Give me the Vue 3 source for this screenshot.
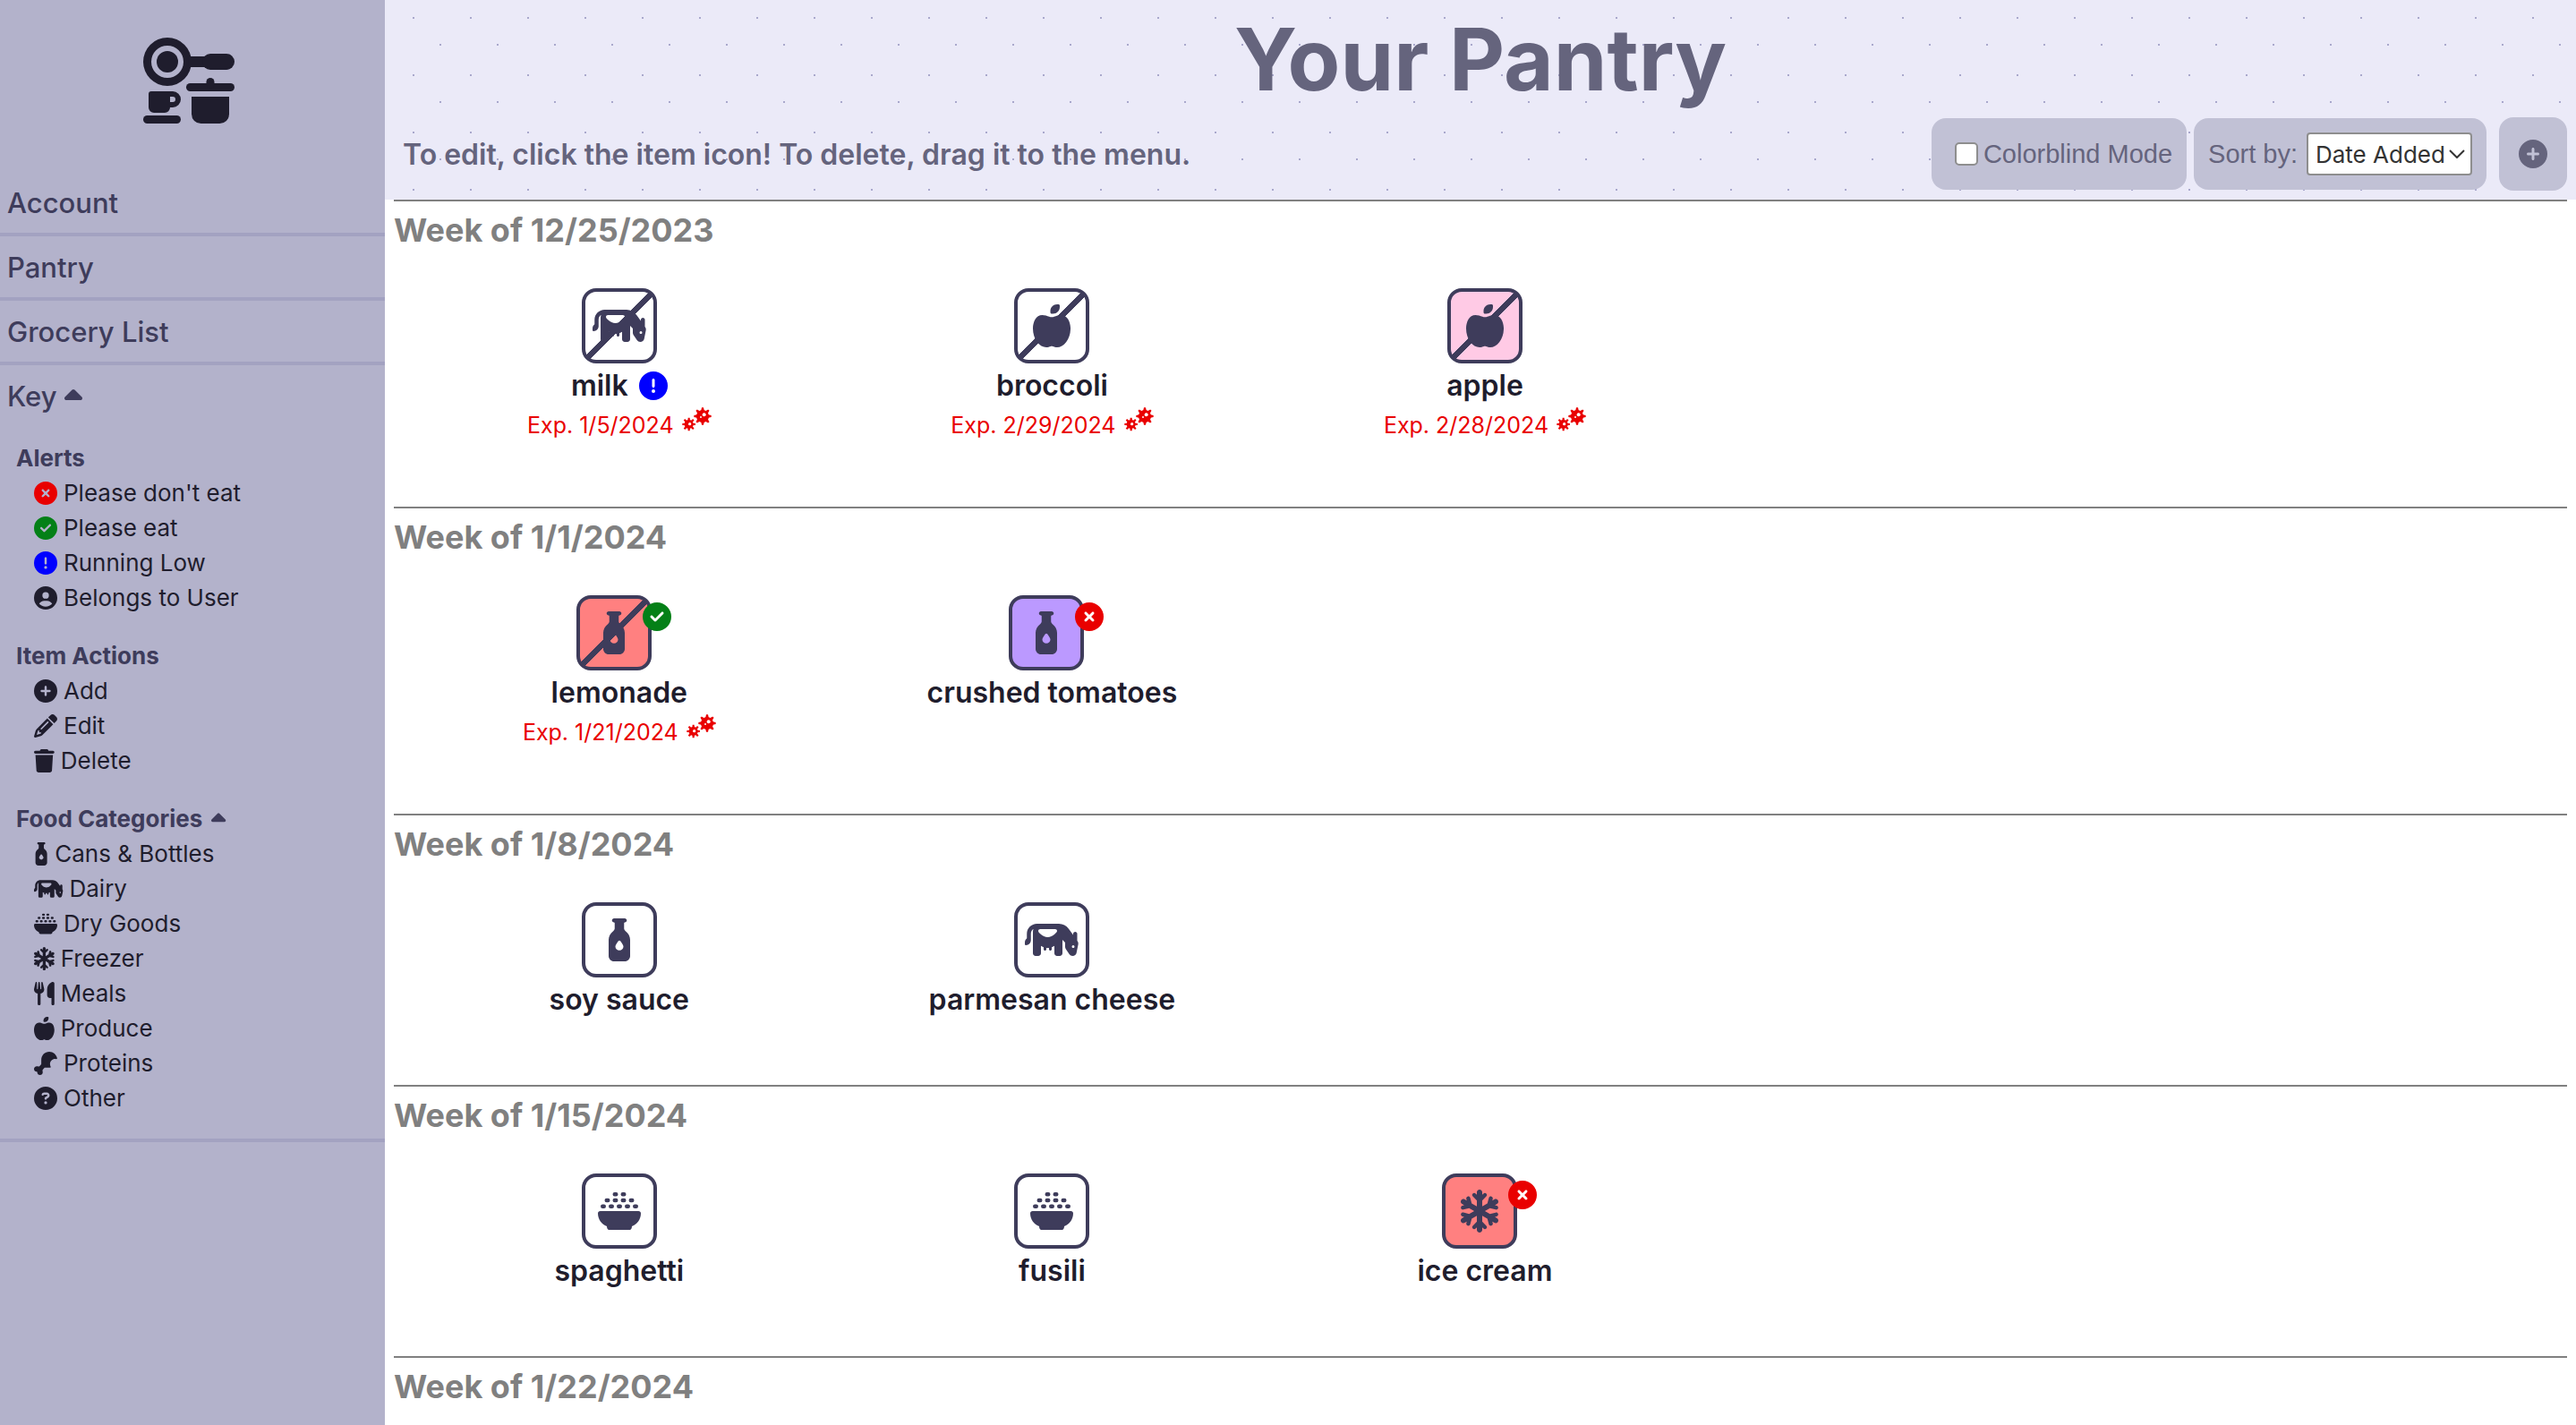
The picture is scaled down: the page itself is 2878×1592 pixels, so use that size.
<script setup>
import { ref } from 'vue'

const disc = 'M256 512A256 256 0 1 0 256 0a256 256 0 1 0 0 512z'

const icons = {
  xmark: { w: 512, d: disc + 'M175 175c9.4-9.4 24.6-9.4 33.9 0l47 47 47-47c9.4-9.4 24.6-9.4 33.9 0s9.4 24.6 0 33.9l-47 47 47 47c9.4 9.4 9.4 24.6 0 33.9s-24.6 9.4-33.9 0l-47-47-47 47c-9.4 9.4-24.6 9.4-33.9 0s-9.4-24.6 0-33.9l47-47-47-47c-9.4-9.4-9.4-24.6 0-33.9z' },
  check: { w: 512, d: disc + 'M369 209L241 337c-9.4 9.4-24.6 9.4-33.9 0l-64-64c-9.4-9.4-9.4-24.6 0-33.9s24.6-9.4 33.9 0l47 47L335 175c9.4-9.4 24.6-9.4 33.9 0s9.4 24.6 0 33.9z' },
  low: { w: 512, d: disc + 'm0-384c13.3 0 24 10.7 24 24V264c0 13.3-10.7 24-24 24s-24-10.7-24-24V152c0-13.3 10.7-24 24-24zM224 352a32 32 0 1 1 64 0 32 32 0 1 1 -64 0z' },
  user: { w: 512, d: 'M399 384.2C376.9 345.8 335.4 320 288 320H224c-47.4 0-88.9 25.8-111 64.2c35.2 39.2 86.2 63.8 143 63.8s107.8-24.7 143-63.8zM0 256a256 256 0 1 1 512 0A256 256 0 1 1 0 256zm256 16a72 72 0 1 0 0-144 72 72 0 1 0 0 144z' },
  plus: { w: 512, d: disc + 'M232 344V280H168c-13.3 0-24-10.7-24-24s10.7-24 24-24h64V168c0-13.3 10.7-24 24-24s24 10.7 24 24v64h64c13.3 0 24 10.7 24 24s-10.7 24-24 24H280v64c0 13.3-10.7 24-24 24s-24-10.7-24-24z' },
  pencil: { w: 512, d: 'M410.3 231l11.3-11.3-33.9-33.9-62.1-62.1L291.7 89.8l-11.3 11.3-22.6 22.6L58.6 322.9c-10.4 10.4-18 23.3-22.2 37.4L1 480.7c-2.5 8.4-.2 17.5 6.1 23.7s15.3 8.5 23.7 6.1l120.3-35.4c14.1-4.2 27-11.8 37.4-22.2L387.7 253.7 410.3 231zM160 399.4l-9.1 22.7c-4 3.1-8.5 5.4-13.3 6.9L59.4 452l23-78.1c1.4-4.9 3.8-9.4 6.9-13.3l22.7-9.1v32c0 8.8 7.2 16 16 16h32zM362.7 18.7L348.3 33.2 325.7 55.8 314.3 67.1l33.9 33.9 62.1 62.1 33.9 33.9 11.3-11.3 22.6-22.6 14.5-14.5c25-25 25-65.5 0-90.5L453.3 18.7c-25-25-65.5-25-90.5 0zm-47.4 168l-144 144c-6.2 6.2-16.4 6.2-22.6 0s-6.2-16.4 0-22.6l144-144c6.2-6.2 16.4-6.2 22.6 0s6.2 16.4 0 22.6z' },
  trash: { w: 448, d: 'M135.2 17.7L128 32H32C14.3 32 0 46.3 0 64S14.3 96 32 96H416c17.7 0 32-14.3 32-32s-14.3-32-32-32H320l-7.2-14.3C307.4 6.8 296.3 0 284.2 0H163.8c-12.1 0-23.2 6.8-28.6 17.7zM416 128H32L53.2 467c1.6 25.3 22.6 45 47.9 45H346.9c25.3 0 46.3-19.7 47.9-45L416 128z' },
  caret: { w: 320, d: 'M182.6 137.4c-12.5-12.5-32.8-12.5-45.3 0l-128 128c-9.2 9.2-11.9 22.9-6.9 34.9s16.6 19.8 29.6 19.8H288c12.9 0 24.6-7.8 29.6-19.8s2.2-25.7-6.9-34.9l-128-128z' },
  bottle: { w: 320, d: 'M96 0C82.7 0 72 10.7 72 24s10.7 24 24 24c4.4 0 8 3.6 8 8v64.9c0 12.2-7.2 23.1-17.2 30.1C53.7 174.1 32 212.5 32 256V448c0 35.3 28.7 64 64 64H224c35.3 0 64-28.7 64-64V256c0-43.5-21.7-81.9-54.8-105c-10-7-17.2-17.9-17.2-30.1V56c0-4.4 3.6-8 8-8c13.3 0 24-10.7 24-24s-10.7-24-24-24H96zm64 382c-26.5 0-48-20.1-48-45c0-16.8 22.1-48.1 36.3-66.4c6-7.8 17.5-7.8 23.5 0C185.9 288.9 208 320.2 208 337c0 24.9-21.5 45-48 45z' },
  cow: { w: 640, d: 'M96 224v32V416c0 17.7 14.3 32 32 32h32c17.7 0 32-14.3 32-32V327.8c9.9 6.6 20.6 12 32 16.1V368c0 8.8 7.2 16 16 16s16-7.2 16-16V351.1c5.3 .6 10.6 .9 16 .9s10.7-.3 16-.9V368c0 8.8 7.2 16 16 16s16-7.2 16-16V343.8c11.4-4 22.1-9.4 32-16.1V416c0 17.7 14.3 32 32 32h32c17.7 0 32-14.3 32-32V256l32 32v49.5c0 9.5 2.8 18.7 8.1 26.6L530 427c8.8 13.1 23.5 21 39.3 21c22.5 0 41.9-15.9 46.3-38l20.3-101.6c2.6-13-.3-26.5-8-37.3l-3.9-5.5V184c0-13.3-10.7-24-24-24s-24 10.7-24 24v14.4l-52.9-74.1C496 86.5 452.4 64 405.9 64H272 256 192 144C77.7 64 24 117.7 24 184v54C9.4 249.8 0 267.8 0 288v17.6c0 8 6.4 14.4 14.4 14.4C46.2 320 72 294.2 72 262.4V256 224 184c0-24.3 12.1-45.8 30.5-58.9C98.3 135.9 96 147.7 96 160v64zM560 336a16 16 0 1 1 32 0 16 16 0 1 1 -32 0zM166.6 166.6c-4.2-4.2-6.6-10-6.6-16c0-12.5 10.1-22.6 22.6-22.6H361.4c12.5 0 22.6 10.1 22.6 22.6c0 6-2.4 11.8-6.6 16l-23.4 23.4C332.2 211.8 302.7 224 272 224s-60.2-12.2-81.9-33.9l-23.4-23.4z' },
  bowl: { w: 512, d: grains() + 'M0 283.4C0 268.3 12.3 256 27.4 256H484.6c15.1 0 27.4 12.3 27.4 27.4c0 70.5-44.4 130.7-106.7 154.1L403.5 452c-2 16-15.6 28-31.8 28H140.2c-16.1 0-29.8-12-31.8-28l-1.8-14.4C44.4 414.1 0 353.9 0 283.4z' },
  snowflake: { w: 448, d: 'M224 0c17.7 0 32 14.3 32 32V62.1l15-15c9.4-9.4 24.6-9.4 33.9 0s9.4 24.6 0 33.9l-49 49v70.3l61.4-35.8 17.7-66.1c3.4-12.8 16.6-20.4 29.4-17s20.4 16.6 17 29.4l-5.2 19.3 23.6-13.8c15.3-8.9 34.9-3.7 43.8 11.5s3.8 34.9-11.5 43.8l-25.3 14.8 21.7 5.8c12.8 3.4 20.4 16.6 17 29.4s-16.6 20.4-29.4 17l-67.7-18.1L287.5 256l60.9 35.5 67.7-18.1c12.8-3.4 26 4.2 29.4 17s-4.2 26-17 29.4l-21.7 5.8 25.3 14.8c15.3 8.9 20.4 28.5 11.5 43.8s-28.5 20.4-43.8 11.5l-23.6-13.8 5.2 19.3c3.4 12.8-4.2 26-17 29.4s-26-4.2-29.4-17l-17.7-66.1L256 311.7v70.3l49 49c9.4 9.4 9.4 24.6 0 33.9s-24.6 9.4-33.9 0l-15-15V480c0 17.7-14.3 32-32 32s-32-14.3-32-32V449.9l-15 15c-9.4 9.4-24.6 9.4-33.9 0s-9.4-24.6 0-33.9l49-49V311.7l-61.4 35.8-17.7 66.1c-3.4 12.8-16.6 20.4-29.4 17s-20.4-16.6-17-29.4l5.2-19.3L48.1 395.6c-15.3 8.9-34.9 3.7-43.8-11.5s-3.7-34.9 11.5-43.8l25.3-14.8-21.7-5.8c-12.8-3.4-20.4-16.6-17-29.4s16.6-20.4 29.4-17l67.7 18.1L160.5 256 99.6 220.5 31.9 238.6c-12.8 3.4-26-4.2-29.4-17s4.2-26 17-29.4l21.7-5.8L15.9 171.6C.6 162.7-4.5 143.1 4.4 127.9s28.5-20.4 43.8-11.5l23.6 13.8-5.2-19.3c-3.4-12.8 4.2-26 17-29.4s26 4.2 29.4 17l17.7 66.1L192 200.3V129.9L143 81c-9.4-9.4-9.4-24.6 0-33.9s24.6-9.4 33.9 0l15 15V32c0-17.7 14.3-32 32-32z' },
  utensils: { w: 448, d: 'M416 0C400 0 288 32 288 176V288c0 35.3 28.7 64 64 64h32V480c0 17.7 14.3 32 32 32s32-14.3 32-32V352 240 32c0-17.7-14.3-32-32-32zM64 16C64 7.8 57.9 1 49.7 .1S34.2 4.6 32.4 12.5L2.1 148.8C.7 155.1 0 161.5 0 167.9c0 45.9 35.1 83.6 80 87.7V480c0 17.7 14.3 32 32 32s32-14.3 32-32V255.6c44.9-4.1 80-41.8 80-87.7c0-6.4-.7-12.8-2.1-19.1L191.6 12.5c-1.8-8-9.3-13.3-17.4-12.4S160 7.8 160 16V150.2c0 5.4-4.4 9.8-9.8 9.8c-5.1 0-9.3-3.9-9.8-9L127.9 14.6C127.2 6.3 120.3 0 112 0s-15.2 6.3-15.9 14.6L83.7 151c-.5 5.1-4.7 9-9.8 9c-5.4 0-9.8-4.4-9.8-9.8V16z' },
  apple: { w: 448, d: 'M224 112c-8.8 0-16-7.2-16-16V80c0-44.2 35.8-80 80-80h16c8.8 0 16 7.2 16 16V32c0 44.2-35.8 80-80 80H224zM0 288c0-76.3 35.7-160 112-160c27.3 0 59.7 10.3 82.7 19.3c18.8 7.3 39.9 7.3 58.7 0c22.9-8.9 55.4-19.3 82.7-19.3c76.3 0 112 83.7 112 160c0 128-80 224-160 224c-16.5 0-38.1-6.6-51.5-11.3c-8.1-2.8-16.9-2.8-25 0c-13.4 4.7-35 11.3-51.5 11.3C80 512 0 416 0 288z' },
  drumstick: { w: 512, d: 'M160 265.2c0 8.5-3.4 16.6-9.4 22.6l-26.8 26.8c-12.3 12.3-32.5 11.4-49.4 7.2C69.8 320.6 65 320 60 320c-33.1 0-60 26.9-60 60s26.9 60 60 60c6.3 0 12 5.7 12 12c0 33.1 26.9 60 60 60s60-26.9 60-60c0-5-.6-9.8-1.8-14.5c-4.2-16.9-5.2-37.1 7.2-49.4l26.8-26.8c6-6 14.1-9.4 22.6-9.4H336c6.3 0 12.4-.3 18.5-1c11.9-1.2 16.4-15.5 10.8-26c-8.5-15.8-13.3-33.8-13.3-53c0-61.9 50.1-112 112-112c8 0 15.7 .8 23.2 2.4c11.7 2.5 24.1-5.9 22-17.6C494.5 62.5 422.5 0 336 0C238.8 0 160 78.8 160 176v89.2z' },
  question: { w: 512, d: disc + 'M169.8 165.3c7.9-22.3 29.1-37.3 52.8-37.3h58.3c34.9 0 63.1 28.3 63.1 63.1c0 22.6-12.1 43.5-31.7 54.8L280 264.4c-.2 13-10.9 23.6-24 23.6c-13.3 0-24-10.7-24-24V250.5c0-8.6 4.6-16.5 12.1-20.8l44.3-25.4c4.7-2.7 7.6-7.7 7.6-13.1c0-8.4-6.8-15.1-15.1-15.1H222.6c-3.4 0-6.4 2.1-7.5 5.3l-.4 1.2c-4.4 12.5-18.2 19-30.6 14.6s-19-18.2-14.6-30.6l.4-1.2zM224 352a32 32 0 1 1 64 0 32 32 0 1 1 -64 0z' },
}

// Rice grains piled above the bowl, three rows of rounded pills
function grains() {
  const rows = [[56, [208, 304]], [128, [112, 208, 304, 400]], [200, [64, 160, 256, 352, 448]]]
  return rows
    .flatMap(([y, xs]) => xs.map((x) => `M${x - 8} ${y - 24}h16a24 24 0 0 1 0 48h-16a24 24 0 0 1 0-48z`))
    .join('')
}

const spikes = [0, 45, 90, 135, 180, 225, 270, 315]

const nav = ['Account', 'Pantry', 'Grocery List']

const keyGroups = [
  {
    title: 'Alerts',
    entries: [
      { icon: 'xmark', label: "Please don't eat", tone: 'red' },
      { icon: 'check', label: 'Please eat', tone: 'green' },
      { icon: 'low', label: 'Running Low', tone: 'blue' },
      { icon: 'user', label: 'Belongs to User' },
    ],
  },
  {
    title: 'Item Actions',
    entries: [
      { icon: 'plus', label: 'Add' },
      { icon: 'pencil', label: 'Edit' },
      { icon: 'trash', label: 'Delete' },
    ],
  },
  {
    title: 'Food Categories',
    caret: true,
    entries: [
      { icon: 'bottle', label: 'Cans & Bottles' },
      { icon: 'cow', label: 'Dairy' },
      { icon: 'bowl', label: 'Dry Goods' },
      { icon: 'snowflake', label: 'Freezer' },
      { icon: 'utensils', label: 'Meals' },
      { icon: 'apple', label: 'Produce' },
      { icon: 'drumstick', label: 'Proteins' },
      { icon: 'question', label: 'Other' },
    ],
  },
]

const weeks = [
  {
    date: '12/25/2023',
    items: [
      { name: 'milk', icon: 'cow', slashed: true, low: true, exp: '1/5/2024' },
      { name: 'broccoli', icon: 'apple', slashed: true, exp: '2/29/2024' },
      { name: 'apple', icon: 'apple', slashed: true, fill: 'pink', exp: '2/28/2024' },
    ],
  },
  {
    date: '1/1/2024',
    items: [
      { name: 'lemonade', icon: 'bottle', slashed: true, fill: 'coral', badge: 'check', tone: 'green', exp: '1/21/2024' },
      { name: 'crushed tomatoes', icon: 'bottle', fill: 'violet', badge: 'xmark', tone: 'red' },
    ],
  },
  {
    date: '1/8/2024',
    items: [
      { name: 'soy sauce', icon: 'bottle' },
      { name: 'parmesan cheese', icon: 'cow' },
    ],
  },
  {
    date: '1/15/2024',
    items: [
      { name: 'spaghetti', icon: 'bowl' },
      { name: 'fusili', icon: 'bowl' },
      { name: 'ice cream', icon: 'snowflake', fill: 'coral', badge: 'xmark', tone: 'red' },
    ],
  },
  { date: '1/22/2024', items: [] },
]

const colorblind = ref(false)
const sortBy = ref('Date Added')
</script>

<template>
  <div class="page">
    <aside class="sidebar">
      <div class="logo">
        <svg viewBox="0 0 576 512" aria-hidden="true">
          <path fill-rule="evenodd" d="M144 0a144 144 0 1 1 0 288a144 144 0 1 1 0-288zM144 48a96 96 0 1 0 0 192a96 96 0 1 0 0-192z" />
          <circle cx="144" cy="144" r="64" />
          <rect x="270" y="112" width="110" height="64" />
          <rect x="352" y="96" width="192" height="96" rx="48" />
          <rect x="256" y="272" width="288" height="48" rx="24" />
          <rect x="376" y="240" width="48" height="60" rx="24" />
          <path d="M288 352H512V456a56 56 0 0 1-56 56H344a56 56 0 0 1-56-56z" />
          <path fill-rule="evenodd" d="M48 320H176a48 48 0 0 1 0 96H160a32 32 0 0 1-32 32H64a32 32 0 0 1-32-32V336a16 16 0 0 1 16-16zM160 352v32h16a16 16 0 0 0 0-32z" />
          <rect x="0" y="464" width="224" height="48" rx="24" />
        </svg>
      </div>

      <nav class="nav">
        <a v-for="label in nav" :key="label" class="nav-row" href="#">{{ label }}</a>
        <button class="nav-row key-toggle" type="button">
          Key
          <svg class="caret" viewBox="0 0 320 512" aria-hidden="true"><path :d="icons.caret.d" /></svg>
        </button>
      </nav>

      <div class="key">
        <section v-for="group in keyGroups" :key="group.title" class="key-group">
          <h3 class="key-title">
            {{ group.title }}
            <svg v-if="group.caret" class="caret" viewBox="0 0 320 512" aria-hidden="true"><path :d="icons.caret.d" /></svg>
          </h3>
          <ul class="key-list">
            <li v-for="entry in group.entries" :key="entry.label" class="key-entry">
              <svg class="key-icon" :class="entry.tone" :viewBox="`0 0 ${icons[entry.icon].w} 512`" aria-hidden="true">
                <path :d="icons[entry.icon].d" />
              </svg>
              <span>{{ entry.label }}</span>
            </li>
          </ul>
        </section>
      </div>
    </aside>

    <main class="main">
      <header class="header">
        <h1 class="title">Your Pantry</h1>
        <div class="toolbar">
          <p class="hint">To edit, click the item icon! To delete, drag it to the menu.</p>
          <div class="controls">
            <label class="panel colorblind" for="colorblind">
              <input id="colorblind" v-model="colorblind" type="checkbox" class="checkbox" />
              <span>Colorblind Mode</span>
            </label>
            <div class="panel sort">
              <label for="sort">Sort by:</label>
              <span class="select-wrap">
                <select id="sort" v-model="sortBy" class="select">
                  <option>Date Added</option>
                  <option>Category</option>
                  <option>Expiration</option>
                </select>
                <svg class="chevron" viewBox="0 0 18 10" aria-hidden="true"><path d="M1 1l8 8l8-8" /></svg>
              </span>
            </div>
            <button class="panel add" type="button" aria-label="Add item">
              <svg viewBox="0 0 512 512" aria-hidden="true"><path :d="icons.plus.d" /></svg>
            </button>
          </div>
        </div>
      </header>

      <section v-for="week in weeks" :key="week.date" class="week">
        <h2 class="week-title">Week of {{ week.date }}</h2>
        <div v-if="week.items.length" class="items">
          <article v-for="item in week.items" :key="item.name" class="item">
            <div class="tile-wrap" :class="{ badged: item.badge }">
              <button class="tile" :class="[item.fill, { slashed: item.slashed }]" type="button" :aria-label="item.name">
                <svg class="tile-icon" :viewBox="`0 0 ${icons[item.icon].w} 512`" aria-hidden="true">
                  <path :d="icons[item.icon].d" />
                </svg>
              </button>
              <svg v-if="item.badge" class="badge" :class="item.tone" viewBox="0 0 512 512" aria-hidden="true">
                <circle class="badge-back" cx="256" cy="256" r="170" />
                <path :d="icons[item.badge].d" />
              </svg>
            </div>
            <div class="name">
              <span>{{ item.name }}</span>
              <svg v-if="item.low" class="low blue" viewBox="0 0 512 512" aria-hidden="true"><path :d="icons.low.d" /></svg>
            </div>
            <div v-if="item.exp" class="exp">
              <span>Exp. {{ item.exp }}</span>
              <svg class="germs" viewBox="0 0 99 81" aria-hidden="true">
                <g transform="translate(23 57)">
                  <path v-for="a in spikes" :key="a" d="M-4-10L-3-22H3L4-10z" :transform="`rotate(${a})`" />
                  <circle r="15" />
                  <circle class="hole" cx="3" cy="-1" r="5" />
                </g>
                <g transform="translate(69 30)">
                  <path v-for="a in spikes" :key="a" d="M-6-16L-3-29H3L6-16z" :transform="`rotate(${a})`" />
                  <circle r="21" />
                  <circle class="hole" cx="5" cy="-5" r="6" />
                  <circle class="hole" cx="-6" cy="3" r="3" />
                </g>
              </svg>
            </div>
          </article>
        </div>
      </section>
    </main>
  </div>
</template>

<style>
html,
body {
  margin: 0;
  height: 100%;
  overflow: hidden;
}

#app {
  height: 100%;
}
</style>

<style scoped>
.page {
  --ink: #3e3c5b;
  --dark: #1f1d2d;
  --muted: #65647d;
  display: flex;
  height: 100%;
  background: #fff;
  color: var(--dark);
  font-family: Inter, "Liberation Sans", sans-serif;
}

svg {
  fill: currentColor;
  flex: none;
}

h1,
h2,
h3,
p,
ul {
  margin: 0;
  padding: 0;
}

.red { color: #e90000; }
.green { color: #048017; }
.blue { color: #0000ff; }

/* Sidebar */
.sidebar {
  flex: none;
  width: 430px;
  background: #b3b2cb;
}

.logo {
  display: flex;
  justify-content: center;
  padding: 42px 2px 54px 0;
}

.logo svg {
  width: 108px;
  height: 96px;
}

.nav-row {
  box-sizing: border-box;
  display: flex;
  align-items: center;
  width: 100%;
  height: 72px;
  padding: 2px 8px 0;
  border: 0;
  border-bottom: 4px solid #a3a2c1;
  background: none;
  color: var(--ink);
  font: 500 31px/66px Inter, "Liberation Sans", sans-serif;
  text-decoration: none;
}

.key-toggle {
  height: 68px;
  gap: 8px;
  border-bottom: 0;
}

.nav-row .caret {
  width: 20px;
  height: 32px;
}

.key {
  display: flex;
  flex-direction: column;
  gap: 26px;
  padding: 16px 0 26px 18px;
  border-bottom: 4px solid #a3a2c1;
  font-size: 26px;
  line-height: 39px;
}

.key-title {
  display: flex;
  align-items: center;
  gap: 10px;
  color: var(--ink);
  font-size: 26px;
  font-weight: 700;
}

.key-title .caret {
  height: 26px;
}

.key-list {
  padding-left: 20px;
  list-style: none;
}

.key-entry {
  display: flex;
  align-items: center;
  gap: 7px;
}

.key-icon {
  height: 26px;
}

/* Header */
.main {
  flex: 1;
  min-width: 0;
}

.header {
  box-sizing: border-box;
  height: 223px;
  padding: 0 10px;
  background-color: #ebeaf8;
  background-image:
    radial-gradient(circle at 32px 20px, #a9a8cc 1px, transparent 1px),
    radial-gradient(circle at 62px 50px, #a9a8cc 1px, transparent 1px);
  background-size: 64px 64px;
  color: var(--muted);
}

.title {
  height: 131px;
  font-size: 96px;
  font-weight: 700;
  line-height: 133px;
  text-align: center;
}

.toolbar {
  display: flex;
  align-items: center;
  justify-content: space-between;
  height: 82px;
}

.hint {
  padding-left: 10px;
  font-size: 32px;
  font-weight: 600;
}

.controls {
  display: flex;
  align-items: center;
  font-family: "Liberation Sans", Arial, sans-serif;
  font-size: 29px;
}

.panel {
  box-sizing: border-box;
  display: flex;
  align-items: center;
  height: 80px;
  padding: 0 16px;
  border: 0;
  border-radius: 16px;
  background: #c1c1d5;
  color: var(--muted);
}

.colorblind {
  gap: 6px;
  margin-right: 8px;
  padding-left: 26px;
}

.checkbox {
  appearance: none;
  width: 26px;
  height: 26px;
  margin: 0;
  border: 2px solid #8e8e8e;
  border-radius: 5px;
  background: #fff;
}

.checkbox:checked {
  background: #3b6fe0;
}

.sort {
  gap: 10px;
  margin-right: 14px;
}

.select-wrap {
  position: relative;
  display: flex;
}

.select {
  appearance: none;
  width: 185px;
  height: 48px;
  padding: 0 8px;
  border: 2px solid #8e8e8e;
  border-radius: 4px;
  background: #fff;
  color: #333;
  font: 26px Inter, "Liberation Sans", sans-serif;
}

.chevron {
  position: absolute;
  top: 19px;
  right: 8px;
  width: 18px;
  height: 10px;
  fill: none;
  stroke: #333;
  stroke-width: 2;
  pointer-events: none;
}

.add {
  justify-content: center;
  width: 76px;
  height: 82px;
}

.add svg {
  width: 32px;
  height: 32px;
}

/* Weeks */
.week {
  margin: 0 10px;
  border-top: 2px solid #808080;
}

.week-title {
  height: 97px;
  color: #808080;
  font-size: 36px;
  font-weight: 700;
  line-height: 65px;
}

.items {
  display: grid;
  grid-template-columns: repeat(5, 1fr);
  padding: 0 0 71px 10px;
}

.item {
  display: flex;
  flex-direction: column;
  align-items: center;
}

.tile-wrap {
  position: relative;
}

.tile-wrap.badged {
  padding-right: 12px;
}

.tile {
  box-sizing: border-box;
  display: flex;
  align-items: center;
  justify-content: center;
  width: 84px;
  height: 84px;
  padding: 0;
  border: 4px solid var(--ink);
  border-radius: 16px;
  background-color: #fff;
  color: var(--ink);
}

.tile.pink { background-color: #ffcae5; }
.tile.coral { background-color: #ff8080; }
.tile.violet { background-color: #bb99ff; }

.tile.slashed {
  background-image: linear-gradient(
    to bottom right,
    transparent calc(50% - 3px),
    var(--ink) calc(50% - 3px),
    var(--ink) calc(50% + 3px),
    transparent calc(50% + 3px)
  );
}

.tile-icon {
  height: 48px;
}

.badge {
  position: absolute;
  top: 8px;
  left: 74px;
  width: 32px;
  height: 32px;
}

.badge-back {
  fill: #fff;
}

.name {
  display: flex;
  align-items: center;
  gap: 12px;
  height: 49px;
  font-size: 32px;
  font-weight: 600;
  line-height: 49px;
}

.low {
  width: 32px;
  height: 32px;
}

.exp {
  display: flex;
  align-items: center;
  gap: 9px;
  height: 40px;
  color: #e90000;
  font-size: 25px;
  line-height: 39px;
}

.germs {
  align-self: flex-start;
  width: 33px;
  height: 27px;
}

.hole {
  fill: #fff;
}
</style>
